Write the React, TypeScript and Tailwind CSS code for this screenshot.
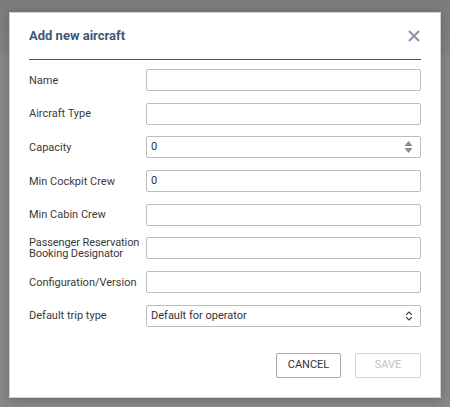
import { ChevronsUpDown } from "lucide-react";

const fields = [
  { label: "Name", value: "" },
  { label: "Aircraft Type", value: "" },
  { label: "Capacity", value: "0", kind: "number" },
  { label: "Min Cockpit Crew", value: "0" },
  { label: "Min Cabin Crew", value: "" },
  { label: "Passenger Reservation Booking Designator", value: "", wrap: true },
  { label: "Configuration/Version", value: "" },
];

function Spinner() {
  return (
    <svg width="9" height="14" viewBox="0 0 9 14" className="text-[#8a8a8a]">
      <path d="M4.5 1 L8.5 6 H0.5 Z" fill="currentColor" />
      <path d="M0.5 8 H8.5 L4.5 13 Z" fill="currentColor" />
    </svg>
  );
}

export default function App() {
  return (
    <div
      className="relative flex h-[407px] w-[450px] flex-col bg-[#898989] pl-[9px] pt-[12px]"
      style={{ fontFamily: "Roboto, 'Liberation Sans', sans-serif" }}
    >
      {/* dimmed header strip behind the overlay */}
      <div className="absolute left-0 right-0 top-0 h-[55px] bg-gradient-to-b from-[#7b7b7b] to-[#848484]" />

      <div className="relative flex h-[386px] w-[432px] flex-col border border-[#c9d2de] bg-white px-[19px] shadow-[0_2px_10px_rgba(0,0,0,0.25)]">
        {/* header */}
        <div className="flex h-[47px] items-center justify-between border-b border-[#3f5274]">
          <h2 className="text-[13px] font-bold text-[#3f5679]">Add new aircraft</h2>
          <svg width="12" height="12" viewBox="0 0 12 12" className="mr-[1px]">
            <path d="M1 1 L11 11 M11 1 L1 11" stroke="#8794a6" strokeWidth="2" />
          </svg>
        </div>

        {/* form */}
        <div className="mt-[9px] flex flex-col gap-[11.7px]">
          {fields.map((f) => (
            <div key={f.label} className="flex items-center">
              <label
                className={`w-[117px] shrink-0 text-[11px] text-[#3a3a3a] ${
                  f.wrap ? "leading-[11px] tracking-[-0.1px]" : "leading-none"
                }`}
              >
                {f.label}
              </label>
              <div className="flex h-[22px] flex-1 items-center justify-between rounded-[2px] border border-[#bdbdbd] pl-[4px] pr-[7px] text-[11px] text-[#333]">
                <span>{f.value}</span>
                {f.kind === "number" && <Spinner />}
              </div>
            </div>
          ))}
          <div className="flex items-center">
            <label className="w-[117px] shrink-0 text-[11px] leading-none text-[#3a3a3a]">Default trip type</label>
            <div className="flex h-[22px] flex-1 items-center justify-between rounded-[2px] border border-[#bdbdbd] pl-[4px] pr-[5px] text-[11px] text-[#333]">
              <span>Default for operator</span>
              <ChevronsUpDown size={12} strokeWidth={2.2} className="text-[#444]" />
            </div>
          </div>
        </div>

        {/* actions */}
        <div className="mt-[26px] flex justify-end gap-[14px]">
          <button className="h-[25px] w-[65px] rounded-[2px] border border-[#a8a8a8] text-[11px] text-[#333]">
            CANCEL
          </button>
          <button className="h-[25px] w-[66px] rounded-[2px] border border-[#d4d4d4] text-[11px] text-[#c2c2c2]">
            SAVE
          </button>
        </div>
      </div>
    </div>
  );
}
